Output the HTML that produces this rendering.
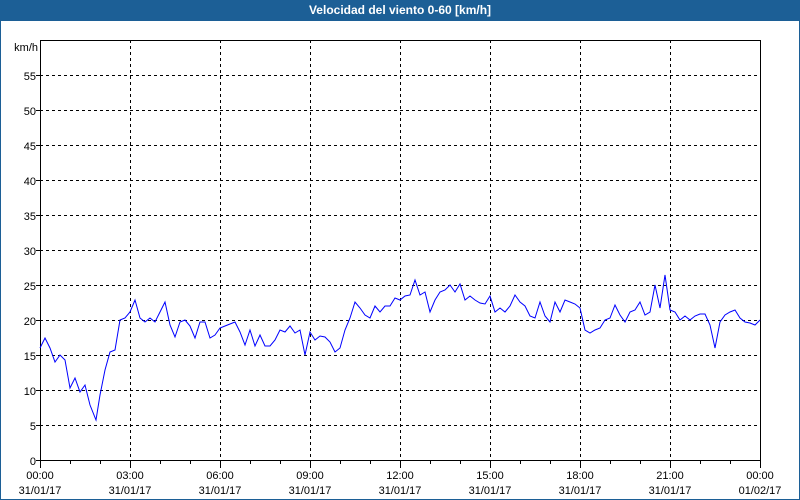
<!DOCTYPE html>
<html><head><style>
body{margin:0;width:800px;height:500px;overflow:hidden;background:#fff;font-family:"Liberation Sans",sans-serif;}
.t{position:absolute;left:0;top:0;width:800px;height:21px;background:#1c5f96;color:#fff;font-weight:bold;font-size:12px;text-align:center;line-height:21px;}
.b{position:absolute;left:0;top:21px;width:798px;height:478px;border:1px solid #1c5f96;border-top:none;}
</style></head><body>
<div class="t">Velocidad del viento 0-60 [km/h]</div>
<div class="b"></div>
<svg width="800" height="500" style="position:absolute;left:0;top:0" font-family="Liberation Sans, sans-serif" font-size="11">
<g stroke="#000" stroke-dasharray="3,3" stroke-width="1">
<line x1="40" x2="760" y1="75.5" y2="75.5"/><line x1="40" x2="760" y1="110.5" y2="110.5"/><line x1="40" x2="760" y1="145.5" y2="145.5"/><line x1="40" x2="760" y1="180.5" y2="180.5"/><line x1="40" x2="760" y1="215.5" y2="215.5"/><line x1="40" x2="760" y1="250.5" y2="250.5"/><line x1="40" x2="760" y1="285.5" y2="285.5"/><line x1="40" x2="760" y1="320.5" y2="320.5"/><line x1="40" x2="760" y1="355.5" y2="355.5"/><line x1="40" x2="760" y1="390.5" y2="390.5"/><line x1="40" x2="760" y1="425.5" y2="425.5"/>
<line y1="40" y2="460" x1="130.5" x2="130.5"/><line y1="40" y2="460" x1="220.5" x2="220.5"/><line y1="40" y2="460" x1="310.5" x2="310.5"/><line y1="40" y2="460" x1="400.5" x2="400.5"/><line y1="40" y2="460" x1="490.5" x2="490.5"/><line y1="40" y2="460" x1="580.5" x2="580.5"/><line y1="40" y2="460" x1="670.5" x2="670.5"/>
</g>
<rect x="40.5" y="40.5" width="720" height="420" fill="none" stroke="#000"/>
<g stroke="#000">
<path d="M40.5 460v8M70.5 460v4M100.5 460v4M130.5 460v8M160.5 460v4M190.5 460v4M220.5 460v8M250.5 460v4M280.5 460v4M310.5 460v8M340.5 460v4M370.5 460v4M400.5 460v8M430.5 460v4M460.5 460v4M490.5 460v8M520.5 460v4M550.5 460v4M580.5 460v8M610.5 460v4M640.5 460v4M670.5 460v8M700.5 460v4M730.5 460v4M760.5 460v8M36 75.5h4M36 110.5h4M36 145.5h4M36 180.5h4M36 215.5h4M36 250.5h4M36 285.5h4M36 320.5h4M36 355.5h4M36 390.5h4M36 425.5h4M36 460.5h4"/>
</g>
<g text-anchor="end" fill="#000">
<text x="38" y="51">km/h</text>
<text x="36" y="80">55</text><text x="36" y="115">50</text><text x="36" y="150">45</text><text x="36" y="185">40</text><text x="36" y="220">35</text><text x="36" y="255">30</text><text x="36" y="290">25</text><text x="36" y="325">20</text><text x="36" y="360">15</text><text x="36" y="395">10</text><text x="36" y="430">5</text><text x="36" y="465">0</text>
</g>
<g text-anchor="middle" fill="#000">
<text x="40" y="479">00:00</text><text x="40" y="494">31/01/17</text>
<text x="130" y="479">03:00</text><text x="130" y="494">31/01/17</text>
<text x="220" y="479">06:00</text><text x="220" y="494">31/01/17</text>
<text x="310" y="479">09:00</text><text x="310" y="494">31/01/17</text>
<text x="400" y="479">12:00</text><text x="400" y="494">31/01/17</text>
<text x="490" y="479">15:00</text><text x="490" y="494">31/01/17</text>
<text x="580" y="479">18:00</text><text x="580" y="494">31/01/17</text>
<text x="670" y="479">21:00</text><text x="670" y="494">31/01/17</text>
<text x="760" y="479">00:00</text><text x="760" y="494">01/02/17</text>
</g>
<polyline fill="none" stroke="#0000ff" stroke-width="1" points="40,348 45,338 50,348 55,362 60,355 65,360 70,388 75,378 80,392 85,385 90,405 96,420 100,395 105,370 110,352 115,350 120,320 125,318 130,312 135,300 140,318 145,322 150,318 155,322 160,312 165,302 170,325 175,337 180,322 185,320 190,326 195,338 200,322 205,322 210,338 215,335 220,328 225,326 230,324 235,322 240,332 245,345 250,330 255,346 260,335 265,346 270,346 275,340 280,330 285,332 290,326 295,333 300,330 305,355 310,332 315,340 320,336 325,337 330,342 335,352 340,348 345,330 350,318 355,302 360,308 365,315 370,318 375,306 380,312 385,306 390,306 395,298 400,300 405,296 410,295 415,280 420,295 425,292 430,312 435,300 440,292 445,290 450,285 455,292 460,284 465,300 470,296 475,300 480,303 485,304 490,296 495,312 500,308 505,312 510,306 515,295 520,302 525,306 530,316 535,318 540,302 545,316 550,322 555,302 560,312 565,300 570,302 575,304 580,308 585,330 590,333 595,330 600,328 605,320 610,318 615,305 620,315 625,322 630,312 635,310 640,302 645,315 650,312 655,285 660,308 665,275 670,310 675,312 680,320 685,316 690,320 695,316 700,314 705,314 710,325 715,348 720,322 725,315 730,312 735,310 740,318 745,322 750,323 755,325 760,320"/>
</svg>
</body></html>
